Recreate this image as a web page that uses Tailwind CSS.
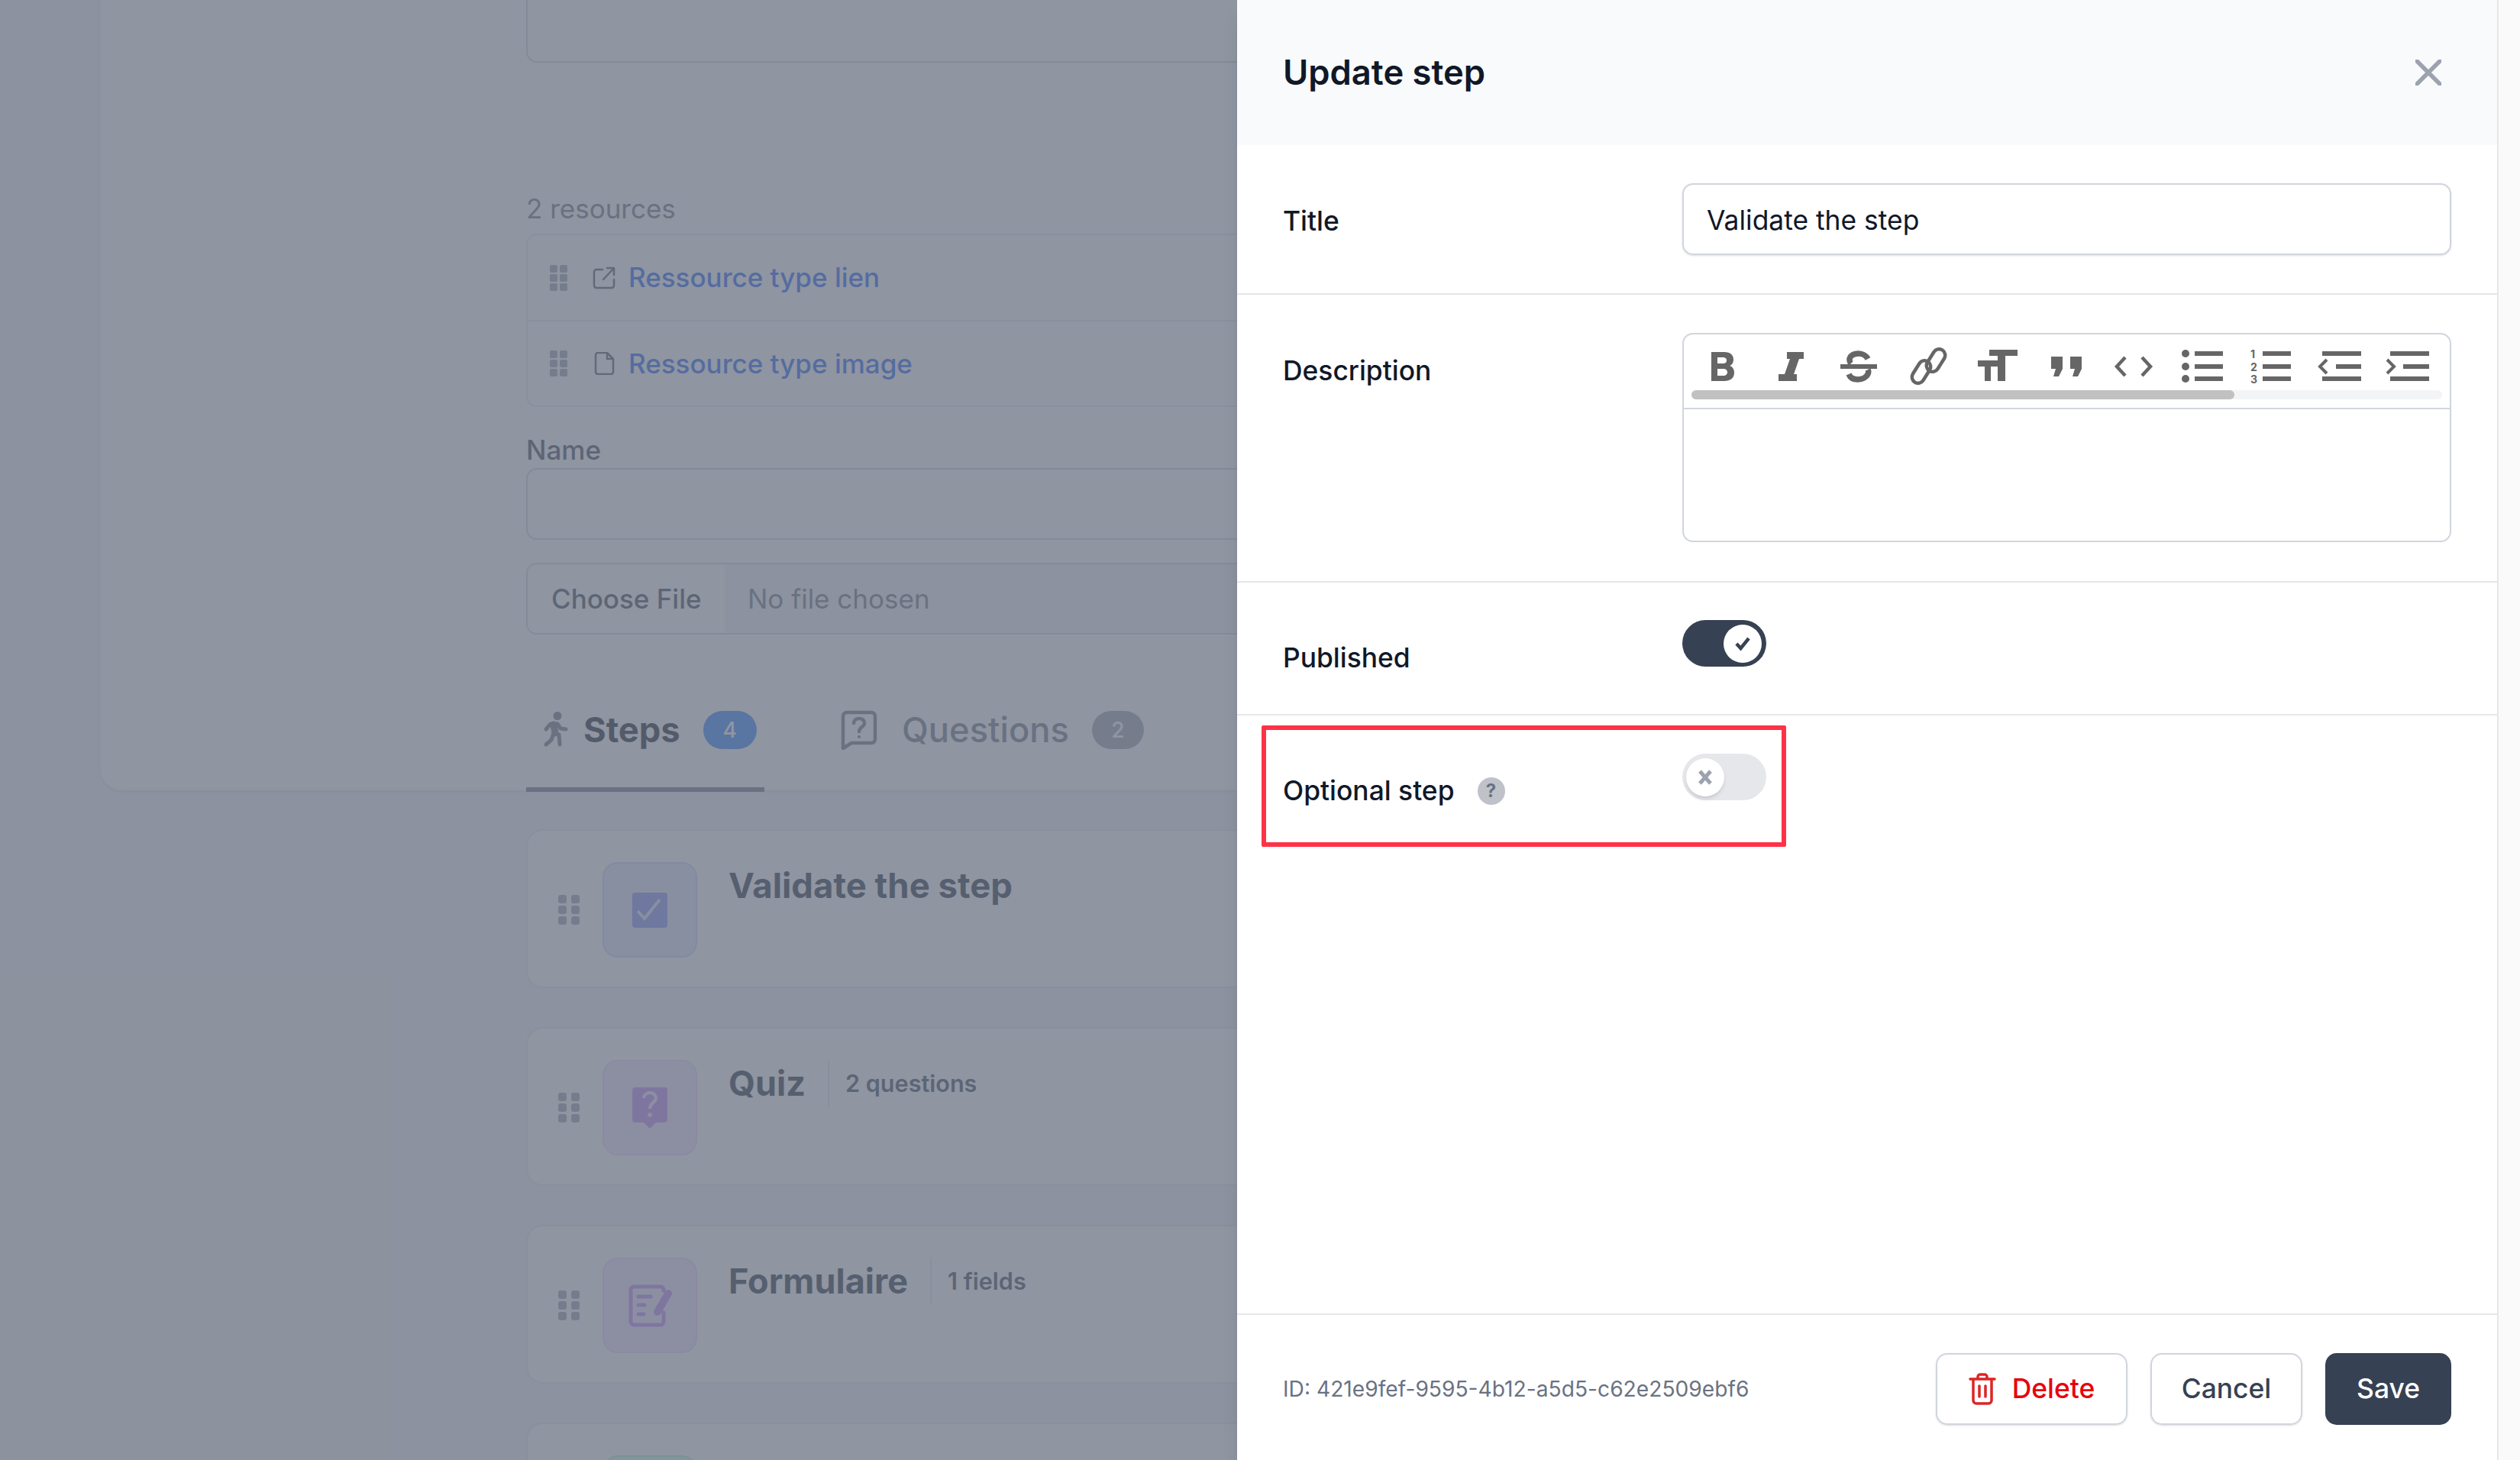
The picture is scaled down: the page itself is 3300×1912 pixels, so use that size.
<!DOCTYPE html>
<html lang="en">
<head>
<meta charset="utf-8">
<title>Update step</title>
<script src="https://cdn.jsdelivr.net/npm/@tailwindcss/browser@4"></script>
</head>
<body class="m-0 overflow-hidden font-['Inter',sans-serif] text-gray-900">
<div class="flex h-[1912px] w-[3300px] overflow-hidden">
  <main class="relative h-full w-[3270px] shrink-0 overflow-hidden bg-gray-100">
    <!-- page behind the overlay -->
    <div class="ml-[130px] h-[1036px] w-[3000px] rounded-b-[30px] border-2 border-t-0 border-gray-100 bg-white pl-[557px] shadow-sm">
      <div class="h-[82px] w-[2000px] rounded-b-[14px] border-2 border-t-0 border-gray-300"></div>
      <p class="mt-[170px] text-[35px] leading-[42px] text-gray-500">2 resources</p>
      <div class="mt-[12px] w-[2000px] rounded-[14px] border-2 border-gray-200 text-[35px] font-medium text-blue-600">
        <div class="flex h-[113px] items-center border-b-2 border-gray-200 pl-[29px]">
          <div class="grid grid-cols-2 gap-x-[3px] gap-y-[2px]"><i class="size-[10px] rounded-[2px] bg-gray-400"></i><i class="size-[10px] rounded-[2px] bg-gray-400"></i><i class="size-[10px] rounded-[2px] bg-gray-400"></i><i class="size-[10px] rounded-[2px] bg-gray-400"></i><i class="size-[10px] rounded-[2px] bg-gray-400"></i><i class="size-[10px] rounded-[2px] bg-gray-400"></i></div>
          <svg class="ml-[33px] mr-[17px]" width="30" height="30" viewBox="0 0 30 30" fill="none" stroke="#4b5563" stroke-width="2.500" stroke-linecap="round" stroke-linejoin="round"><path d="M13 4H5a3 3 0 0 0-3 3v18a3 3 0 0 0 3 3h20a3 3 0 0 0 3-3v-8M14 17 28 2M19 2h9v9"/></svg>
          <span>Ressource type lien</span>
        </div>
        <div class="flex h-[110px] items-center pl-[29px]">
          <div class="grid grid-cols-2 gap-x-[3px] gap-y-[2px]"><i class="size-[10px] rounded-[2px] bg-gray-400"></i><i class="size-[10px] rounded-[2px] bg-gray-400"></i><i class="size-[10px] rounded-[2px] bg-gray-400"></i><i class="size-[10px] rounded-[2px] bg-gray-400"></i><i class="size-[10px] rounded-[2px] bg-gray-400"></i><i class="size-[10px] rounded-[2px] bg-gray-400"></i></div>
          <svg class="ml-[33px] mr-[17px]" width="30" height="30" viewBox="0 0 30 30" fill="none" stroke="#4b5563" stroke-width="2.500" stroke-linecap="round" stroke-linejoin="round"><path d="M4 4a3 3 0 0 1 3-3h12l8 8v17a3 3 0 0 1-3 3H7a3 3 0 0 1-3-3zM19 1v8h8"/></svg>
          <span>Ressource type image</span>
        </div>
      </div>
      <label class="mt-[34px] block text-[35px] font-medium leading-[44px] text-gray-700">Name</label>
      <div class="mt-[2px] h-[94px] w-[2000px] rounded-[14px] border-2 border-gray-300"></div>
      <div class="mt-[30px] flex h-[94px] w-[2000px] items-center overflow-hidden rounded-[14px] border-2 border-gray-300 text-[35px]">
        <span class="flex h-full w-[258px] items-center bg-white pl-[31px] font-medium text-gray-700">Choose File</span>
        <span class="flex h-full flex-1 items-center bg-gray-100 pl-[30px] text-gray-500">No file chosen</span>
      </div>
      <div class="mt-[46px] flex h-[160px] w-[2000px] items-center border-b-2 border-gray-200 text-[45.3px]">
        <div class="relative flex h-full w-[312px] items-center pl-[21px]">
          <svg width="34" height="48" viewBox="0 0 34 48" fill="none" stroke="#6b7280" stroke-linecap="round" stroke-linejoin="round"><circle cx="20" cy="5.500" r="5.500" fill="#6b7280" stroke="none"/><path stroke-width="5" d="M5 23l6-7h8M20 16l4 6 7 1M22 30l1 13M15 28l-3 9-7 6"/><path stroke-width="9" d="M15 17l2 11"/></svg>
          <span class="ml-[20px] font-bold">Steps</span>
          <span class="ml-[30px] flex h-[50px] w-[70px] items-center justify-center rounded-full bg-blue-500 text-[28px] font-medium text-white">4</span>
          <i class="absolute bottom-[-2px] left-0 h-[6px] w-full bg-gray-500"></i>
        </div>
        <div class="ml-[100px] flex items-center font-medium text-gray-500">
          <svg width="48" height="52" viewBox="0 0 48 52" fill="none" stroke="#6b7280" stroke-width="4.500" stroke-linejoin="round"><path d="M8 3h32a5 5 0 0 1 5 5v30a5 5 0 0 1-5 5H14L3 50V8a5 5 0 0 1 5-5z"/><path stroke-linecap="round" d="M17 17c0-4 3-6 7-6s7 2 7 6c0 5-7 5-7 11"/><circle cx="24" cy="35" r="2" fill="#6b7280" stroke="none"/></svg>
          <span class="ml-[32px]">Questions</span>
          <span class="ml-[30px] flex h-[50px] w-[68px] items-center justify-center rounded-full bg-gray-400 text-[28px] font-medium text-white">2</span>
        </div>
      </div>
    </div>
    <div class="ml-[689px] mt-[50px] flex w-[2400px] flex-col gap-[51px]">
      <div class="flex h-[208px] items-start rounded-[22px] border-2 border-gray-200 bg-white pl-[40px] pt-[41px]">
        <div class="mt-[43px] grid grid-cols-2 gap-x-[6px] gap-y-[3px]"><i class="size-[11px] rounded-[3px] bg-gray-400"></i><i class="size-[11px] rounded-[3px] bg-gray-400"></i><i class="size-[11px] rounded-[3px] bg-gray-400"></i><i class="size-[11px] rounded-[3px] bg-gray-400"></i><i class="size-[11px] rounded-[3px] bg-gray-400"></i><i class="size-[11px] rounded-[3px] bg-gray-400"></i></div>
        <div class="ml-[30px] flex h-[125px] w-[124px] items-center justify-center rounded-[20px] border-2 border-indigo-200 bg-indigo-100">
          <svg width="46" height="46" viewBox="0 0 46 46"><rect width="46" height="46" rx="4" fill="#818cf8"/><path d="M7 24l9 10L36 9" fill="none" stroke="#e0e7ff" stroke-width="4"/></svg>
        </div>
        <span class="ml-[41px] text-[45.500px] font-bold leading-[62px] text-gray-800">Validate the step</span>
      </div>
      <div class="flex h-[208px] items-start rounded-[22px] border-2 border-gray-200 bg-white pl-[40px] pt-[41px]">
        <div class="mt-[43px] grid grid-cols-2 gap-x-[6px] gap-y-[3px]"><i class="size-[11px] rounded-[3px] bg-gray-400"></i><i class="size-[11px] rounded-[3px] bg-gray-400"></i><i class="size-[11px] rounded-[3px] bg-gray-400"></i><i class="size-[11px] rounded-[3px] bg-gray-400"></i><i class="size-[11px] rounded-[3px] bg-gray-400"></i><i class="size-[11px] rounded-[3px] bg-gray-400"></i></div>
        <div class="ml-[30px] flex h-[125px] w-[124px] items-center justify-center rounded-[20px] border-2 border-purple-200 bg-purple-100">
          <svg width="46" height="54" viewBox="0 0 46 54"><path d="M4 0h38a4 4 0 0 1 4 4v38a4 4 0 0 1-4 4H31l-8 8-8-8H4a4 4 0 0 1-4-4V4a4 4 0 0 1 4-4z" fill="#c084fc"/><path d="M15 14c0-4 4-7 8-7s8 3 8 7c0 6-8 6-8 14" fill="none" stroke="#f3e8ff" stroke-width="4"/><circle cx="23" cy="36" r="2.800" fill="#f3e8ff"/></svg>
        </div>
        <span class="ml-[41px] text-[45px] font-bold leading-[62px] text-gray-800">Quiz</span>
        <span class="ml-[29px] flex h-[62px] items-center border-l-2 border-gray-200 pl-[21px] text-[30.600px] font-semibold text-gray-700">2 questions</span>
      </div>
      <div class="flex h-[208px] items-start rounded-[22px] border-2 border-gray-200 bg-white pl-[40px] pt-[41px]">
        <div class="mt-[43px] grid grid-cols-2 gap-x-[6px] gap-y-[3px]"><i class="size-[11px] rounded-[3px] bg-gray-400"></i><i class="size-[11px] rounded-[3px] bg-gray-400"></i><i class="size-[11px] rounded-[3px] bg-gray-400"></i><i class="size-[11px] rounded-[3px] bg-gray-400"></i><i class="size-[11px] rounded-[3px] bg-gray-400"></i><i class="size-[11px] rounded-[3px] bg-gray-400"></i></div>
        <div class="ml-[30px] flex h-[125px] w-[124px] items-center justify-center rounded-[20px] border-2 border-purple-200 bg-purple-100">
          <svg class="ml-[3px]" width="60" height="56" viewBox="0 0 60 56" fill="none" stroke="#c084fc" stroke-linecap="round"><path stroke-width="5" d="M46 8V7a4 4 0 0 0-4-4H7a4 4 0 0 0-4 4v42a4 4 0 0 0 4 4h35a4 4 0 0 0 4-4V37"/><path stroke-width="5" d="M13 16h16M13 27h8M13 39h7"/><path stroke-width="10" d="M52 12 38 36"/></svg>
        </div>
        <span class="ml-[41px] text-[45px] font-bold leading-[62px] text-gray-800">Formulaire</span>
        <span class="ml-[29px] flex h-[62px] items-center border-l-2 border-gray-200 pl-[21px] text-[30.600px] font-semibold text-gray-700">1 fields</span>
      </div>
      <div class="flex h-[208px] items-start rounded-[22px] border-2 border-gray-200 bg-white pl-[40px] pt-[41px]">
        <div class="ml-[58px] h-[125px] w-[124px] rounded-[20px] border-2 border-emerald-200 bg-emerald-100"></div>
      </div>
    </div>
    <!-- overlay -->
    <div class="absolute inset-0 bg-gray-500/75"></div>
    <!-- slide-over panel -->
    <aside class="absolute inset-y-0 right-0 flex w-[1650px] flex-col bg-white shadow-xl">
      <header class="flex h-[190px] shrink-0 items-center justify-between bg-gray-50 pl-[60px] pr-[73px]">
        <h2 class="text-[45.300px] font-semibold text-gray-900">Update step</h2>
        <svg width="34" height="34" viewBox="0 0 34 34" fill="none" stroke="#9ca3af" stroke-width="5.500" stroke-linecap="round"><path d="M2 2l30 30M32 2 2 32"/></svg>
      </header>
      <div class="flex-1 text-[35.400px] font-medium leading-[52px]">
        <div class="grid grid-cols-[523px_1007px] border-b-2 border-gray-200 px-[60px] py-[50px]">
          <label class="pt-[24px]">Title</label>
          <div class="flex h-[94px] items-center rounded-[14px] border-2 border-gray-300 pl-[30px] pt-[3px] font-normal shadow-sm">Validate the step</div>
        </div>
        <div class="grid grid-cols-[523px_1007px] border-b-2 border-gray-200 px-[60px] pb-[51px] pt-[50px]">
          <label class="pt-[24px]">Description</label>
          <div class="h-[274px] rounded-[14px] border-2 border-gray-300">
            <div class="h-[98px] border-b-2 border-gray-300 pl-[4px]">
              <div class="flex pt-[17px]">
                <button class="flex w-[90px] justify-center"><svg width="64" height="50" viewBox="0 0 64 50" fill="#666" fill-rule="evenodd"><path d="M19 6h17c8 0 12 4 12 10 0 4-2 7-5 8 4 1 6 5 6 9 0 7-5 11-13 11H19zM27 13v8h7c3 0 5-1 5-4s-2-4-5-4zM27 28v9h8c3 0 5-2 5-4.500s-2-4.500-5-4.500z"/></svg></button>
                <button class="flex w-[90px] justify-center"><svg width="64" height="50" viewBox="0 0 64 50" fill="#666"><path d="M28 6h22v9h-6l-7 20h4v9H17v-9h8l7-20h-4z"/></svg></button>
                <button class="flex w-[90px] justify-center"><svg width="64" height="50" viewBox="0 0 64 50" fill="none" stroke="#666"><path stroke-width="7.500" d="M44 15c-2-4-7-7-12-7-8 0-12 4-12 8 0 2 1 4 2 5M44 29c1 2 1 4 0 6-2 4-7 7-13 7-5 0-10-2-12-7"/><path stroke-width="6" d="M8 25h48"/></svg></button>
                <button class="flex w-[90px] justify-center"><svg width="64" height="50" viewBox="0 0 64 50" fill="none" stroke="#666" stroke-width="4.500"><rect x="-8" y="-16" width="16" height="32" rx="8" transform="translate(43 17) rotate(32)"/><rect x="-8" y="-16" width="16" height="32" rx="8" transform="translate(24 32) rotate(32)"/></svg></button>
                <button class="flex w-[90px] justify-center"><svg width="64" height="50" viewBox="0 0 64 50" fill="#666"><path d="M23 3h37v8H44v33H34V11H23zM8 17h26v8h-9v19h-8V25H8z"/></svg></button>
                <button class="flex w-[90px] justify-center"><svg width="64" height="50" viewBox="0 0 64 50" fill="#666"><path d="M14 12h15v16l-5 10h-7l3-10h-6zM39 12h15v16l-5 10h-7l3-10h-6z"/></svg></button>
                <button class="flex w-[90px] justify-center"><svg width="64" height="50" viewBox="0 0 64 50" fill="none" stroke="#666" stroke-width="4.500"><path d="M21 13 10 25l11 12M43 13l11 12-11 12"/></svg></button>
                <button class="flex w-[90px] justify-center"><svg width="64" height="50" viewBox="0 0 64 50" fill="#666"><circle cx="10" cy="8" r="5"/><circle cx="10" cy="25" r="5"/><circle cx="10" cy="41" r="5"/><path d="M22 5h37v6H22zM22 22h37v6H22zM22 38h37v6H22z"/></svg></button>
                <button class="flex w-[90px] justify-center"><svg width="64" height="50" viewBox="0 0 64 50" fill="#666"><text x="5" y="14" font-family="Inter, sans-serif" font-size="14" font-weight="700">1</text><text x="5" y="31" font-family="Inter, sans-serif" font-size="14" font-weight="700">2</text><text x="5" y="47" font-family="Inter, sans-serif" font-size="14" font-weight="700">3</text><path d="M21 5h37v6H21zM21 22h37v6H21zM21 38h37v6H21z"/></svg></button>
                <button class="flex w-[90px] justify-center"><svg width="64" height="50" viewBox="0 0 64 50" fill="#666"><path d="M9 5h51v6H9zM27 22h33v6H27zM9 38h51v6H9z"/><path d="M15 16 6 25l9 9" fill="none" stroke="#666" stroke-width="4"/></svg></button>
                <button class="flex w-[90px] justify-center"><svg width="64" height="50" viewBox="0 0 64 50" fill="#666"><path d="M8 5h51v6H8zM25 22h34v6H25zM8 38h51v6H8z"/><path d="M4 16l9 9-9 9" fill="none" stroke="#666" stroke-width="4"/></svg></button>
              </div>
              <div class="ml-[6px] mt-[6px] h-[12px] w-[983px] rounded-full bg-gray-100"><div class="h-full w-[711px] rounded-full bg-[#c1c1c1]"></div></div>
            </div>
          </div>
        </div>
        <div class="grid h-[174px] grid-cols-[523px_1007px] border-b-2 border-gray-200 px-[60px] pt-[49px]">
          <label class="pt-[24px]">Published</label>
          <div class="flex h-[61px] w-[110px] items-center justify-end rounded-full bg-gray-700 pr-[6px]">
            <span class="flex size-[50px] items-center justify-center rounded-full bg-white"><svg width="22" height="22" viewBox="0 0 22 22" fill="none" stroke="#374151" stroke-width="4.500"><path d="M3 11l5.500 6L19 4"/></svg></span>
          </div>
        </div>
        <div class="grid grid-cols-[523px_1007px] px-[60px] pt-[50px]">
          <label class="flex items-center pt-[23px]">Optional step<span class="ml-[30px] flex size-[36px] items-center justify-center rounded-full bg-[#bfc2c9] text-[24px] font-bold leading-none text-gray-500">?</span></label>
          <div class="flex h-[61px] w-[110px] items-center rounded-full bg-gray-200 pl-[5px]">
            <span class="flex size-[50px] items-center justify-center rounded-full bg-white shadow-md"><svg width="18" height="20" viewBox="0 0 18 20" fill="none" stroke="#9ca3af" stroke-width="5"><path d="M2 2l14 16M16 2 2 18"/></svg></span>
          </div>
        </div>
      </div>
      <footer class="flex h-[192px] shrink-0 items-center justify-between border-t-2 border-gray-200 px-[60px] pt-[4px]">
        <span class="text-[28.200px] text-gray-500">ID: 421e9fef-9595-4b12-a5d5-c62e2509ebf6</span>
        <div class="flex gap-[30px] text-[35.400px] font-medium">
          <button class="flex h-[94px] w-[251px] items-center justify-center gap-[21px] rounded-[15px] border-2 border-gray-300 text-red-600 shadow-sm">
            <svg width="36" height="42" viewBox="0 0 36 42" fill="none" stroke="#dc2626" stroke-width="3.500" stroke-linecap="round" stroke-linejoin="round"><path d="M2 8h32M12 8V5a3 3 0 0 1 3-3h6a3 3 0 0 1 3 3v3M6 8v28a4 4 0 0 0 4 4h16a4 4 0 0 0 4-4V8M14 17v14M22 17v14"/></svg>
            <span>Delete</span>
          </button>
          <button class="h-[94px] w-[199px] rounded-[15px] border-2 border-gray-300 text-gray-700 shadow-sm">Cancel</button>
          <button class="h-[94px] w-[165px] rounded-[15px] bg-gray-700 text-white">Save</button>
        </div>
      </footer>
      <div class="pointer-events-none absolute left-[32px] top-[950px] h-[159px] w-[687px] rounded-[2px] border-[6px] border-[#ff3347]"></div>
    </aside>
  </main>
  <div class="h-full flex-1 border-l-2 border-gray-200 bg-[#fafafa]"></div>
</div>
</body>
</html>
